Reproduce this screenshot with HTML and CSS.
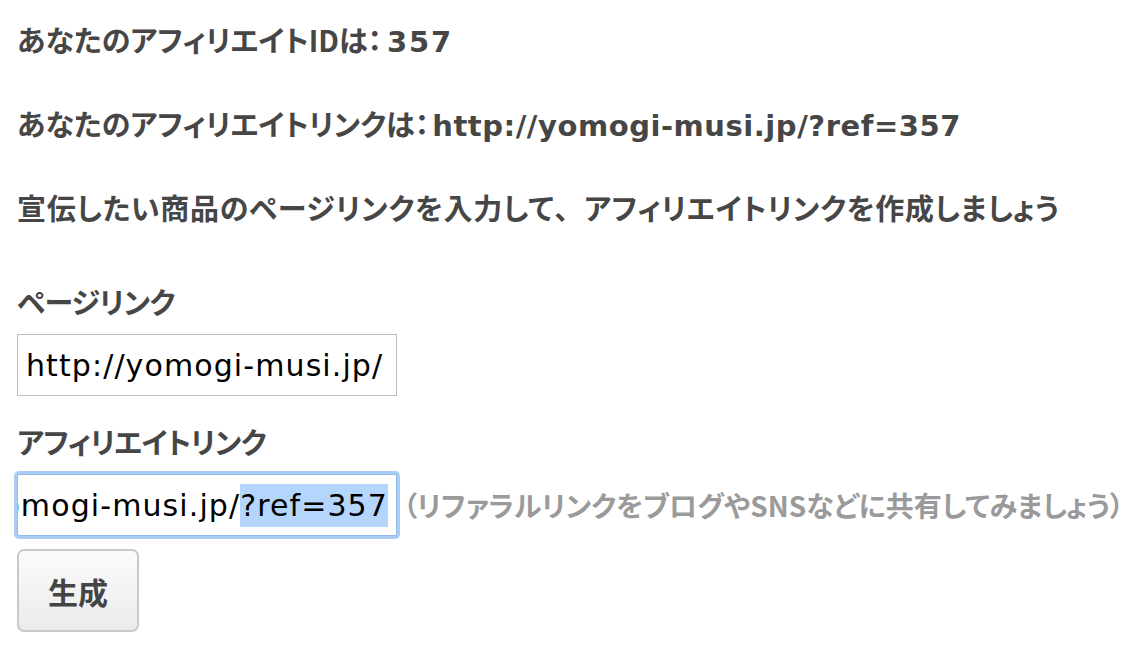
FILE: index.html
```html
<!DOCTYPE html>
<html lang="ja">
<head>
<meta charset="utf-8">
<title>アフィリエイト</title>
<link rel="stylesheet" href="styles.css">
</head>
<body>
<main class="page">
  <p class="line">あなたのアフィリエイトIDは：<span class="en en-id">357</span></p>
  <p class="line">あなたのアフィリエイトリンクは：<span class="en">http://yomogi-musi.jp/?ref=357</span></p>
  <p class="line line-wide">宣伝したい商品のページリンクを入力して<span class="punct">、</span>アフィリエイトリンクを作成しましょう</p>
  <form class="form">
    <label class="label">ページリンク</label>
    <div class="field">
      <div class="input"><span>http://yomogi-musi.jp/</span></div>
    </div>
    <label class="label">アフィリエイトリンク</label>
    <div class="field">
      <div class="input input-focus"><span>http://yomogi-musi.jp/<span class="sel">?ref=357</span></span></div>
      <span class="note">（リファラルリンクをブログやSNSなどに共有してみましょう）</span>
    </div>
    <div class="actions">
      <button type="button" class="btn">生成</button>
    </div>
  </form>
</main>
</body>
</html>
```
FILE: styles.css
```css
html, body {
  margin: 0;
  padding: 0;
  background: #ffffff;
}
body {
  font-family: "Noto Sans CJK JP", "Noto Sans", sans-serif;
  color: #464646;
}
.page {
  padding: 18px 0 0 17px;
}
.line {
  margin: 0 0 42px 0;
  height: 42px;
  font-size: 29px;
  font-weight: 700;
  line-height: 42px;
  white-space: nowrap;
  font-feature-settings: "palt";
}
.line:last-of-type {
  margin-bottom: 0;
}
.line-wide {
  letter-spacing: 0.7px;
}
.punct {
  font-feature-settings: normal;
}
.en {
  font-family: "DejaVu Sans", "Liberation Sans", sans-serif;
  font-size: 29px;
  line-height: 42px;
  letter-spacing: 0.55px;
  margin-left: 3px;
}
.en-id {
  letter-spacing: 1.8px;
  margin-left: 5px;
}
.form {
  display: flex;
  flex-direction: column;
  margin-top: 52px;
}
.label {
  display: block;
  height: 42px;
  font-size: 29px;
  font-weight: 700;
  line-height: 42px;
  margin-bottom: 12px;
  letter-spacing: -0.7px;
  font-feature-settings: "palt";
}
.field {
  display: flex;
  align-items: center;
  gap: 6px;
  margin-bottom: 24px;
}
.field:nth-of-type(2) {
  margin-bottom: 13px;
}
.input {
  box-sizing: border-box;
  flex: none;
  width: 380px;
  height: 62px;
  border: 1px solid #bdbdbd;
  background: #fff;
  display: flex;
  align-items: center;
  padding: 0 8px;
  overflow: hidden;
  white-space: nowrap;
  font-family: "DejaVu Sans", "Liberation Sans", sans-serif;
  font-size: 30px;
  letter-spacing: 1.1px;
  color: #000;
}
.input-focus {
  justify-content: flex-end;
  border: 1px solid #8fbcea;
  box-shadow: 0 0 0 3px #a9cdf5;
  border-radius: 2px;
}
.sel {
  background: #b4d6fc;
  padding: 4px 0;
}
.note {
  font-size: 28px;
  font-weight: 700;
  color: #9a9a9a;
  white-space: nowrap;
  font-feature-settings: "palt";
}
.actions {
  display: flex;
}
.btn {
  box-sizing: border-box;
  width: 122px;
  height: 83px;
  border: 2px solid #c9c9c9;
  border-radius: 7px;
  background: linear-gradient(#fbfbfb, #ebebeb);
  font-family: "Noto Sans CJK JP", sans-serif;
  font-size: 30px;
  font-weight: 700;
  color: #444;
  padding: 0;
}
```
